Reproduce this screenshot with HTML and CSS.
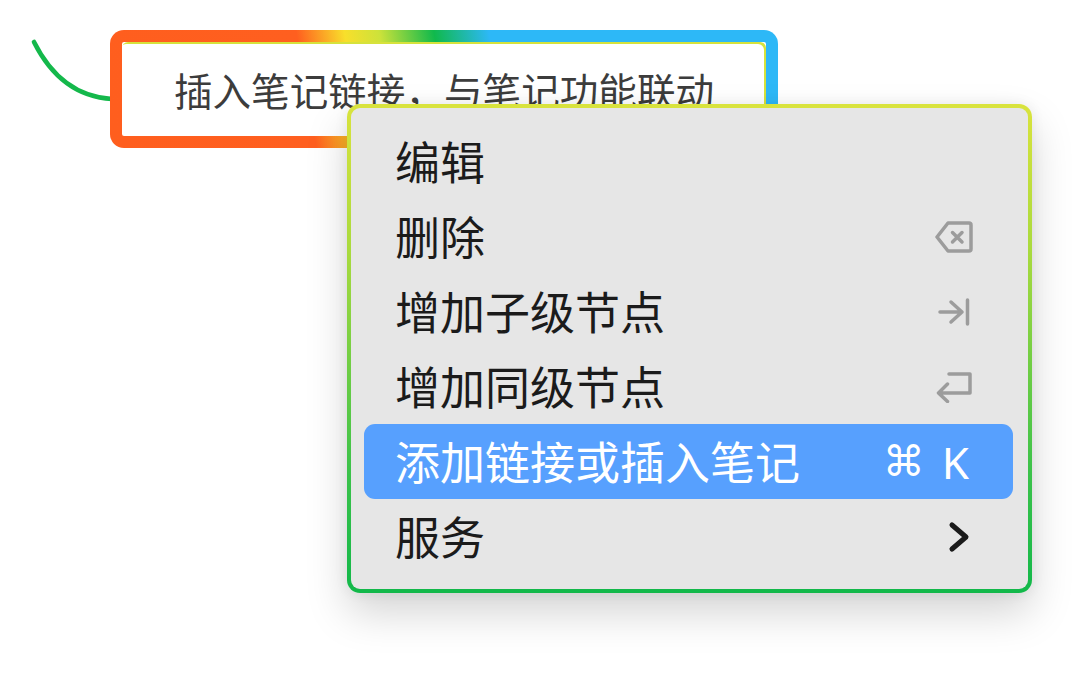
FILE: index.html
```html
<!DOCTYPE html>
<html lang="zh-CN">
<head>
<meta charset="utf-8">
<title>Mind map context menu</title>
<link rel="stylesheet" href="styles.css">
</head>
<body>
<div class="canvas">
  <svg class="link" width="130" height="110" viewBox="0 0 130 110">
    <path d="M34 42 Q61 96 112 99" fill="none" stroke="#14b84b" stroke-width="4.6" stroke-linecap="round"/>
  </svg>

  <div class="node">
    <div class="node-inner">插入笔记链接，与笔记功能联动</div>
  </div>

  <div class="menu">
    <div class="item"><span class="label">编辑</span></div>
    <div class="item">
      <span class="label">删除</span>
      <svg class="ico ico-del" width="38" height="32" viewBox="0 0 38 32">
        <path d="M13 2 H34 Q36 2 36 4 V28 Q36 30 34 30 H13 L2 16 Z" fill="none" stroke="#9c9c9c" stroke-width="3.5" stroke-linejoin="round"/>
        <path d="M17.5 11.5 L27 21 M27 11.5 L17.5 21" stroke="#9c9c9c" stroke-width="3.5" stroke-linecap="round"/>
      </svg>
    </div>
    <div class="item">
      <span class="label">增加子级节点</span>
      <svg class="ico ico-tab" width="32" height="28" viewBox="0 0 32 28">
        <path d="M2 14 H24 M13 4 L24 14 L13 24" fill="none" stroke="#9c9c9c" stroke-width="3.5" stroke-linecap="round" stroke-linejoin="round"/>
        <path d="M29.5 2 V26" stroke="#9c9c9c" stroke-width="3.5" stroke-linecap="round"/>
      </svg>
    </div>
    <div class="item">
      <span class="label">增加同级节点</span>
      <svg class="ico ico-ret" width="38" height="32" viewBox="0 0 38 32">
        <path d="M14 3 H35 V22 H4 M12.5 13 L3.5 22 L12.5 30.5" fill="none" stroke="#9c9c9c" stroke-width="3.5" stroke-linecap="round" stroke-linejoin="round"/>
      </svg>
    </div>
    <div class="item active">
      <span class="label">添加链接或插入笔记</span>
      <span class="shortcut"><span class="cmd">⌘</span><span class="key">K</span></span>
    </div>
    <div class="item">
      <span class="label">服务</span>
      <svg class="ico ico-chev" width="22" height="32" viewBox="0 0 22 32">
        <path d="M4 4 L18 16 L4 28" fill="none" stroke="#1a1a1a" stroke-width="5" stroke-linecap="round" stroke-linejoin="round"/>
      </svg>
    </div>
  </div>
</div>
</body>
</html>
```

FILE: styles.css
```css
html, body {
  margin: 0;
  padding: 0;
  background: #ffffff;
}

body {
  font-family: "Noto Sans CJK SC", "Noto Sans", sans-serif;
}

.canvas {
  position: relative;
  width: 1080px;
  height: 692px;
  overflow: hidden;
  background: #ffffff;
}

.link {
  position: absolute;
  left: 0;
  top: 0;
}

.node {
  position: absolute;
  left: 110px;
  top: 30px;
  width: 668px;
  height: 118px;
  box-sizing: border-box;
  border: 12px solid transparent;
  border-radius: 14px;
  background:
    linear-gradient(#ffffff, #ffffff) padding-box,
    linear-gradient(80deg, #ff5e1e 0%, #ff5f1f 30%, #f8df2b 37%, #cde23a 42%, #10b94c 50%, #2db8f7 58%, #2db8f7 100%) border-box;
  display: flex;
}

.node-inner {
  flex: 1;
  border-radius: 6px;
  box-shadow: inset -2px 2px 0 #d6e23c;
  display: flex;
  align-items: center;
  justify-content: center;
  font-size: 38.6px;
  color: #3c3c3c;
  white-space: nowrap;
}

.menu {
  position: absolute;
  left: 347px;
  top: 104px;
  width: 685px;
  height: 489px;
  box-sizing: border-box;
  border: 4px solid transparent;
  border-radius: 13px;
  background:
    linear-gradient(#e6e6e6, #e6e6e6) padding-box,
    linear-gradient(180deg, #d9e33d 0%, #a9da3e 30%, #3cc24a 75%, #12b84a 100%) border-box;
  box-shadow: 0 20px 42px rgba(0, 0, 0, 0.17), 0 0 14px rgba(0, 0, 0, 0.07);
  padding: 16px 15px 15px 13px;
  display: flex;
  flex-direction: column;
}

.item {
  height: 75px;
  flex: none;
  display: flex;
  align-items: center;
  justify-content: space-between;
  padding: 0 40px 0 31px;
  border-radius: 11px;
  font-size: 45px;
  color: #1b1b1b;
  white-space: nowrap;
}

.label {
  line-height: 1;
  position: relative;
  top: -1px;
}

.item.active {
  background: #57a0fe;
  color: #ffffff;
}

.ico {
  display: block;
  flex: none;
}

.ico-tab {
  margin-right: 3px;
}

.ico-chev {
  margin-right: 3px;
}

.shortcut {
  display: flex;
  align-items: center;
  gap: 17px;
  color: #ffffff;
  line-height: 1;
  margin-right: 4px;
}

.cmd {
  font-family: "DejaVu Sans", sans-serif;
  font-size: 42px;
}

.key {
  font-family: "Noto Sans", "Liberation Sans", sans-serif;
  font-size: 44px;
}
```
